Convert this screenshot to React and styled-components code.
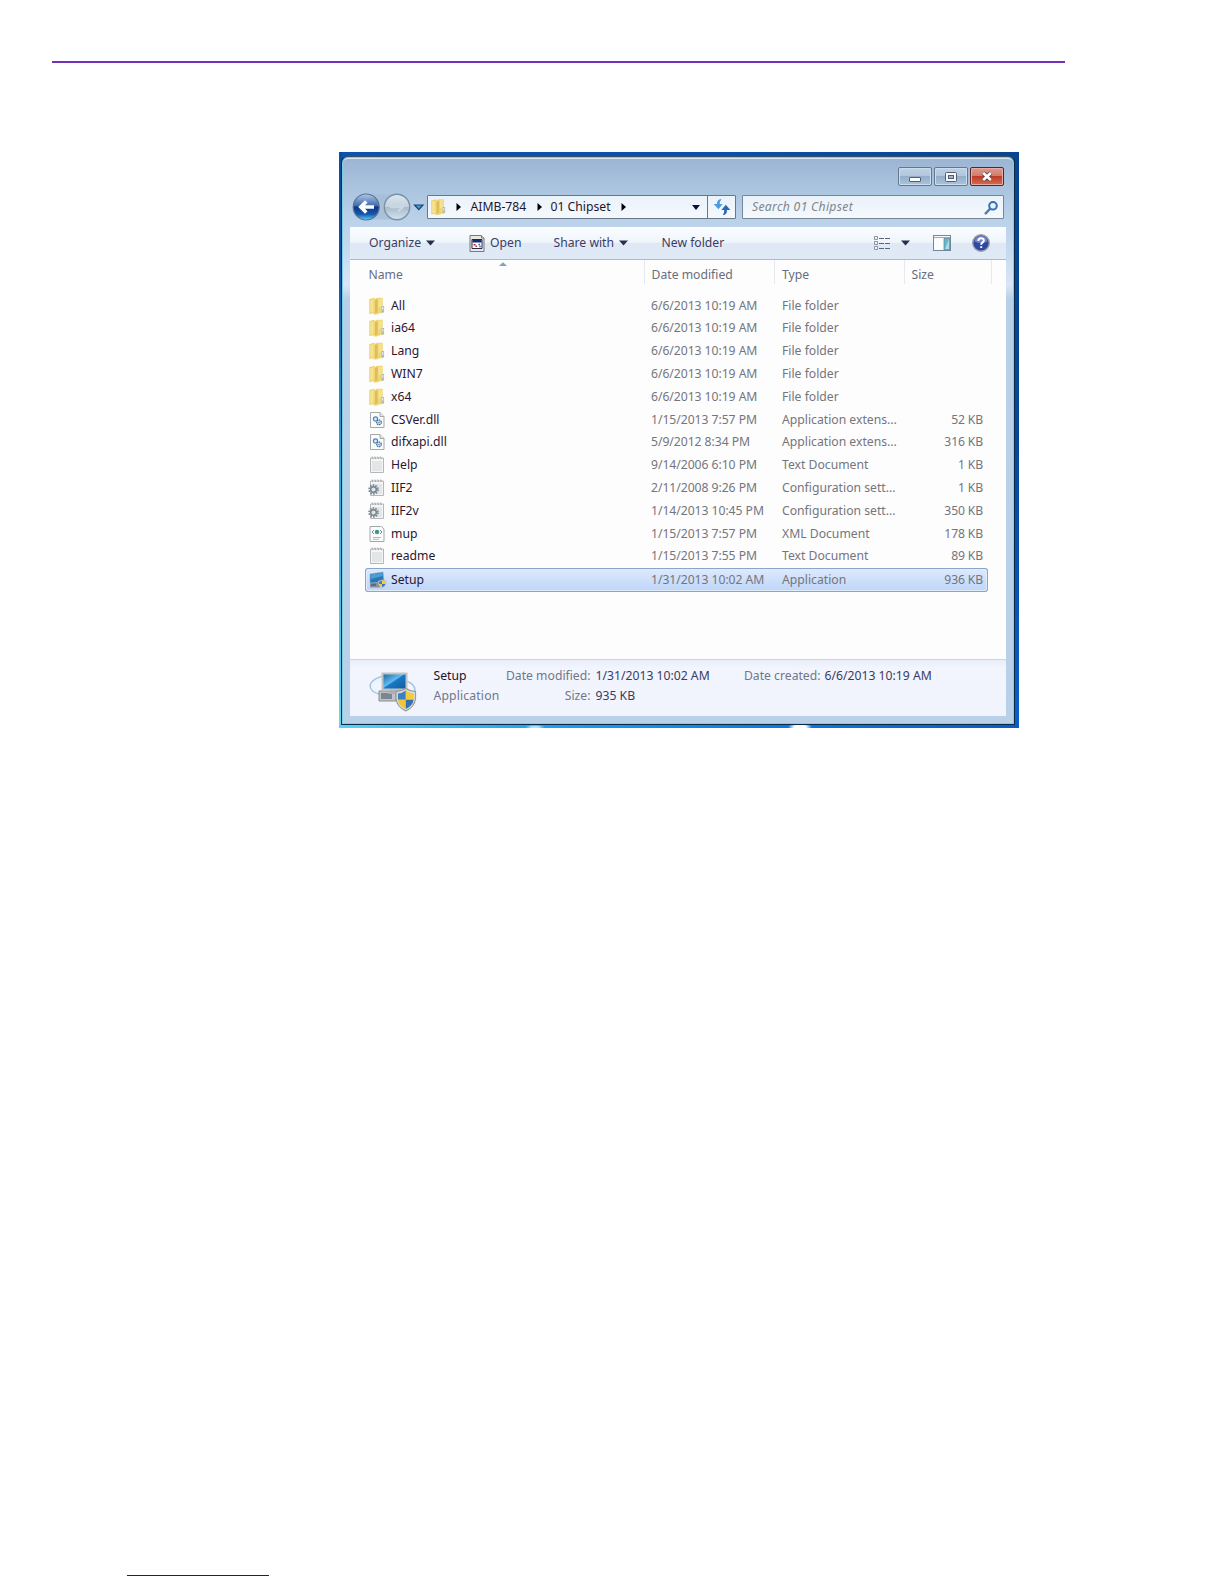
import React from "react";
import styled, { createGlobalStyle } from "styled-components";

const GlobalStyle = createGlobalStyle`
  * { box-sizing: border-box; }
  body { margin: 0; background: #fff; }
`;

const Page = styled.main`
  width: 1224px;
  height: 1584px;
  padding-top: 61px;
  overflow: hidden;
  background: #fff;
  font: 12.2px/20px "Noto Sans", "Open Sans", sans-serif;
  color: #1d1530;
  white-space: pre;
`;

const HeaderRule = styled.div`
  width: 1013px;
  height: 2px;
  margin: 0 0 89px 52px;
  background: #7430b8;
`;

const FooterRule = styled.div`
  width: 142px;
  height: 1px;
  margin: 847px 0 0 127px;
  background: #1c1490;
`;

const Desktop = styled.section`
  width: 680px;
  height: 576px;
  margin-left: 339px;
  padding: 4px 4px 3px 2px;
  background:
    radial-gradient(ellipse 12px 4px at 461px 575px, #fff 50%, transparent) no-repeat,
    radial-gradient(ellipse 10px 2px at 196px 575px, #a5e4fa 40%, transparent) no-repeat,
    linear-gradient(90deg, #5bd2f5, #1ba3f0 30%, #0b78e0 65%, #0a5cc0) 0 573px / 100% 3px no-repeat,
    linear-gradient(#0b4ea4, #0b56aa 20%, #35a4d8 55%, #66d6f4) 0 0 / 3px 100% no-repeat,
    linear-gradient(90deg, #0d55ac, #0850a8 60%, #0a448e) 0 0 / 100% 5px no-repeat,
    linear-gradient(#0a448e, #06479a 50%, #0a5fc8);
`;

const Window = styled.div`
  width: 674px;
  height: 569px;
  display: flex;
  flex-direction: column;
  padding: 0 7px 7px;
  border: 1px solid #082c48;
  border-top-color: #36506c;
  border-radius: 7px 7px 1px 1px;
  background: linear-gradient(#9ab4d2, #a9c2dd 28px, #bad1e9 62px, #c3d9ef 90px, #d8e6f5 128px, #b8cfe8 142px, #b9d1e8);
  box-shadow: inset 0 0 0 1px #7fd0e0, inset 0 2px 0 #d9e8f3;
`;

const WindowInner = styled.div`
  display: flex;
  flex-direction: column;
  flex: 1;
  margin: 0 1px 1px;
`;

const TitleBar = styled.div`
  display: flex;
  justify-content: flex-end;
  gap: 2px;
  height: 38px;
  padding: 10px 2px 0 0;
`;

const CaptionButton = styled.button`
  width: 34px;
  height: 19px;
  padding: 0;
  display: grid;
  place-items: center;
  border: 1px solid ${(p) => (p.$close ? "#54252b" : "#63798f")};
  border-radius: 2px;
  box-shadow: inset 0 0 0 1px ${(p) => (p.$close ? "#e8ada5" : "#cbdcec")};
  background: ${(p) =>
    p.$close
      ? "linear-gradient(#dc9a8d, #d27a69 48%, #bd3c28 50%, #d27050)"
      : "linear-gradient(#bfd1e4, #b0c6dd 48%, #94aeca 50%, #aac4df)"};
`;

const NavBar = styled.div`
  display: flex;
  align-items: center;
  height: 24px;
  padding-right: 2px;
`;

const NavArrows = styled.svg`
  width: 77px;
  height: 30px;
  flex: none;
`;

const AddressBar = styled.div`
  display: flex;
  align-items: center;
  width: 309px;
  height: 24px;
  margin-right: 6px;
  border: 1px solid #67788b;
  border-radius: 1px;
  background: linear-gradient(#eaf2fa, #f5f9fd);
`;

const Crumb = styled.span`
  width: ${(p) => p.$w}px;
  padding-left: ${(p) => p.$pad || 0}px;
  flex: none;
`;

const Spacer = styled.span`
  width: ${(p) => p.$w}px;
  flex: none;
`;

const RefreshButton = styled.span`
  display: grid;
  place-items: center;
  width: 28px;
  height: 22px;
  margin-left: auto;
  border-left: 1px solid #67788b;
`;

const SearchBox = styled.div`
  display: flex;
  align-items: center;
  justify-content: space-between;
  flex: 1;
  height: 24px;
  padding: 0 4px 0 9px;
  border: 1px solid #73869b;
  border-radius: 1px;
  background: linear-gradient(#e9f1f9, #f5f9fd);
  color: #7e858e;
  font-style: italic;
  letter-spacing: 0.3px;
`;

const Client = styled.div`
  display: flex;
  flex-direction: column;
  flex: 1;
  margin-top: 8px;
  background: #fdfdfe;
`;

const ToolBar = styled.div`
  display: flex;
  align-items: center;
  height: 33px;
  padding: 0 15px 0 19px;
  border-bottom: 1px solid #a9bbd2;
  background: linear-gradient(#fbfdff, #eff5fc 48%, #dfe9f6 50%, #e0eaf7);
  color: #3b3c62;
`;

const ToolItem = styled.span`
  display: flex;
  align-items: center;
  width: ${(p) => p.$w}px;
  gap: 5px;
`;

const Columns = styled.div`
  display: grid;
  grid-template-columns: 295px 130px 130px 87px 1fr;
  height: 34.3px;
  color: #686d7c;
`;

const ColumnHead = styled.div`
  height: 24px;
  padding: 5px 0 0 ${(p) => p.$pad}px;
  border-right: 1px solid #e6eaf0;
`;

const SortMark = styled.svg`
  display: block;
  width: 8px;
  height: 4px;
  margin: -3px 0 -1px 130px;
`;

const Rows = styled.div`
  padding-left: 15px;
`;

const Row = styled.div`
  display: grid;
  grid-template-columns: 20px 266px 131px 130px 71px;
  align-items: center;
  width: 623px;
  height: 22.8px;
  color: #74757d;
  ${(p) =>
    p.$selected &&
    `
    height: 24px;
    border-radius: 3px;
    background: linear-gradient(#dfeafc, #bcd5f9);
    box-shadow: inset 0 0 0 1px #8ba4c8, inset 0 0 0 2px #e0ebfb;
  `}
`;

const FileIcon = styled.svg`
  width: 17px;
  height: 18px;
  margin-left: 4px;
  overflow: visible;
`;

const FileName = styled.span`
  padding-left: 6px;
  color: #2b1630;
`;

const Cell = styled.span`
  letter-spacing: ${(p) => p.$ls || 0}px;
`;

const SizeCell = styled.span`
  text-align: right;
  letter-spacing: -0.15px;
`;

const Details = styled.footer`
  display: flex;
  height: 57px;
  margin-top: auto;
  padding: 6px 0 0 19px;
  border-top: 1px solid #cdd3e6;
  background: linear-gradient(#e9edf8, #f2f5fd 8px, #f1f4fd);
  color: #71768a;
`;

const BigIcon = styled.svg`
  width: 48px;
  height: 42px;
  margin: 6px 16.5px 0 0;
`;

const DetailGrid = styled.div`
  display: grid;
  grid-template-columns: 64px 93px 5px 146px 79px 4px 120px;
  grid-auto-rows: 20px;
  align-content: start;
`;

const DetailLabel = styled.span`
  justify-self: end;
`;

const DetailValue = styled.span`
  grid-column: ${(p) => p.$col};
  color: ${(p) => (p.$name ? "#20112a" : "#3a3a64")};
`;

const Caret = () => (
  <svg width="9" height="6" viewBox="0 0 9 6">
    <path d="M0 .5h9L4.5 5.5z" fill="#26304e" />
  </svg>
);

const CrumbArrow = () => (
  <svg width="5" height="8" viewBox="0 0 5 8">
    <path d="M.5 0 5 4 .5 8z" fill="#000" />
  </svg>
);

const FolderShape = () => (
  <g transform="translate(-.8 -.3) scale(1.08)">
    <path d="M1 2.2 6 1v14l-5 1z" fill="#e9cf6c" />
    <path d="M5.5 2.5 8 1h5.5v13.5L8 16.5H5z" fill="#efd778" />
    <path d="M1.8 3 5 2.2v12L1.8 15z" fill="#f5e190" />
    <path d="M6.2 3.4 8.8 2.2v12.2l-2.6 1.4z" fill="#e0be57" />
    <path d="M9.5 2h3.2v7l-3.2 1z" fill="#f5e191" />
    <path d="M12.3 8.5h2.4v5.8l-2.4 1z" fill="#b6bda5" />
    <path d="M12.8 9.5h1.2v2.5h-1.2z" fill="#dbe8f2" />
  </g>
);

const Paper = ({ folded }) => (
  <>
    <path
      d={folded ? "M1.5 1.5H11l4 4v11H1.5z" : "M1.5 2.5h13v14h-13z"}
      fill="#fafbfb"
      stroke="#a4a8aa"
    />
    {folded && <path d="M11 1.5v4h4" fill="#e3e7ea" stroke="#a4a8aa" />}
  </>
);

const Notepad = () => (
  <>
    <path d="M1.5 2h13v14.5h-13z" fill="#f4f5f5" stroke="#b4b8ba" />
    <path d="M3 6h10M3 8h10M3 10h10M3 12h10M3 14h10" stroke="#d3d6d7" />
    <path d="M3 .5 4 3M5.8.5l1 2.5M8.6.5l1 2.5M11.4.5l1 2.5" stroke="#a0a4a5" />
  </>
);

const Shield = ({ transform }) => (
  <g transform={transform}>
    <path d="M10 0Q15 3 20 3V10Q19 18 10 22Q1 18 0 10V3Q5 3 10 0" fill="#d7d9d5" stroke="#92968e" />
    <path d="M10 2v9H2V5q4 0 8-3" fill="#3a7fc9" />
    <path d="M10 2q4 3 8 3v6h-8z" fill="#f3cd38" />
    <path d="M2 11h8v9q-7-3-8-9" fill="#f1c632" />
    <path d="M10 11h8q-1 6-8 9z" fill="#356fb8" />
  </g>
);

const icons = {
  folder: <FolderShape />,
  dll: (
    <>
      <Paper folded />
      <circle cx="6.5" cy="8" r="2.1" fill="#d9e9f5" stroke="#5586b0" strokeWidth="1.2" />
      <circle cx="10" cy="11.3" r="2.3" fill="#e5f0f8" stroke="#396e9f" strokeWidth="1.3" strokeDasharray="1.3 .6" />
      <circle cx="10" cy="11.3" r=".7" fill="#396e9f" />
    </>
  ),
  text: <Notepad />,
  config: (
    <>
      <Notepad />
      <circle cx="4.5" cy="10.5" r="4.3" fill="none" stroke="#7e8d97" strokeWidth="2" strokeDasharray="1.6 1.1" />
      <circle cx="4.5" cy="10.5" r="2.8" fill="#dce4e8" stroke="#71818c" strokeWidth="1.4" />
    </>
  ),
  xml: (
    <>
      <path d="M1 1.5h11.5l2.5 2.5v12.5H1z" fill="#fafbfb" stroke="#a4a8aa" />
      <path d="M5 5 3 7l2 2M11 5l2 2-2 2" fill="none" stroke="#738ba1" />
      <circle cx="8" cy="7" r="2.3" fill="#48a182" />
      <path d="M7 6.1 8.5 5.6l.8 1.4-1 .8z" fill="#4276b8" />
      <path d="M4 12.5h8M4 14.3h6" stroke="#b5b9bb" />
    </>
  ),
  setup: (
    <>
      <path d="M1 11h10v5.5H1z" fill="#899097" />
      <path d="M2 12.5h5v2.5H2z" fill="#636b72" />
      <path d="m1 3 13-2 1 10-14 1z" fill="#2b76b7" stroke="#8ab4d2" strokeWidth=".7" />
      <path d="m1.5 3.5 12-1.8.4 3.3L2 8z" fill="#4e9cd4" />
      <Shield transform="translate(9.3 8.7) scale(.38)" />
    </>
  ),
};

const files = [
  ["folder", "All", "6/6/2013 10:19 AM", "File folder", ""],
  ["folder", "ia64", "6/6/2013 10:19 AM", "File folder", ""],
  ["folder", "Lang", "6/6/2013 10:19 AM", "File folder", ""],
  ["folder", "WIN7", "6/6/2013 10:19 AM", "File folder", ""],
  ["folder", "x64", "6/6/2013 10:19 AM", "File folder", ""],
  ["dll", "CSVer.dll", "1/15/2013 7:57 PM", "Application extens...", "52 KB"],
  ["dll", "difxapi.dll", "5/9/2012 8:34 PM", "Application extens...", "316 KB"],
  ["text", "Help", "9/14/2006 6:10 PM", "Text Document", "1 KB"],
  ["config", "IIF2", "2/11/2008 9:26 PM", "Configuration sett...", "1 KB"],
  ["config", "IIF2v", "1/14/2013 10:45 PM", "Configuration sett...", "350 KB"],
  ["xml", "mup", "1/15/2013 7:57 PM", "XML Document", "178 KB"],
  ["text", "readme", "1/15/2013 7:55 PM", "Text Document", "89 KB"],
  ["setup", "Setup", "1/31/2013 10:02 AM", "Application", "936 KB"],
];

const BackForward = () => (
  <NavArrows viewBox="0 0 77 30">
    <defs>
      <linearGradient id="back" x2="0" y2="1">
        <stop stopColor="#b3c9e8" />
        <stop offset=".45" stopColor="#3e6bb0" />
        <stop offset=".5" stopColor="#0d3585" />
        <stop offset=".78" stopColor="#1559b0" />
        <stop offset="1" stopColor="#62cdf4" />
      </linearGradient>
      <linearGradient id="forward" x2="0" y2="1">
        <stop stopColor="#dbe6ee" />
        <stop offset=".48" stopColor="#c4d2de" />
        <stop offset=".52" stopColor="#a9bccd" />
        <stop offset="1" stopColor="#d5e2ee" />
      </linearGradient>
    </defs>
    <path d="M16 2.5h31q10 2 12 12l-12 13H16z" fill="#a4bad2" opacity=".65" />
    <circle cx="16.2" cy="15" r="13" fill="url(#back)" stroke="#5a7395" strokeWidth="1.2" />
    <path d="M24 15H11.5M16.3 9.4 10.7 15l5.6 5.6" fill="none" stroke="#fff" strokeWidth="3.5" />
    <circle cx="47" cy="15" r="12.7" fill="url(#forward)" stroke="#7990a8" strokeWidth="1.4" />
    <path d="M40 15h12M48 10.5l4.8 4.5-4.8 4.5" fill="none" stroke="#c9d7e3" strokeWidth="2.3" />
    <path d="M64.5 13h8.5l-4.2 4.7z" fill="#4297d2" stroke="#1e436f" strokeWidth="1.2" />
  </NavArrows>
);

export default function App() {
  return (
    <Page>
      <GlobalStyle />
      <HeaderRule />
      <Desktop>
        <Window>
          <WindowInner>
            <TitleBar>
              <CaptionButton aria-label="Minimize">
                <svg width="12" height="14" viewBox="0 0 12 14">
                  <rect x=".5" y="7.5" width="11" height="4" rx=".5" fill="#fff" stroke="#535d6d" />
                </svg>
              </CaptionButton>
              <CaptionButton aria-label="Maximize">
                <svg width="12" height="10" viewBox="0 0 12 10">
                  <rect x=".5" y=".5" width="11" height="9" rx="1" fill="#f6f8fa" stroke="#535d6d" />
                  <rect x="3.5" y="3.5" width="5" height="3" fill="#9fb7d0" stroke="#535d6d" />
                </svg>
              </CaptionButton>
              <CaptionButton $close aria-label="Close">
                <svg width="14" height="11" viewBox="0 0 14 11">
                  <path d="m3.2 2 7.6 7M10.8 2 3.2 9" stroke="#59404b" strokeWidth="4.4" />
                  <path d="m3.2 2 7.6 7M10.8 2 3.2 9" stroke="#fff" strokeWidth="2.7" />
                </svg>
              </CaptionButton>
            </TitleBar>
            <NavBar>
              <BackForward />
              <AddressBar>
                <Spacer $w={3} />
                <svg width="15" height="18" viewBox="0 0 16 18"><FolderShape /></svg>
                <Spacer $w={10} />
                <CrumbArrow />
                <Crumb $w={76} $pad={9.5}>AIMB-784</Crumb>
                <CrumbArrow />
                <Crumb $w={79} $pad={8.5}>01 Chipset</Crumb>
                <CrumbArrow />
                <Spacer $w={65.5} />
                <svg width="8" height="5" viewBox="0 0 8 5"><path d="M0 0h8L4 5z" fill="#0a0e45" /></svg>
                <RefreshButton>
                  <svg width="18" height="18" viewBox="0 0 16 16">
                    <path d="M7.6.8Q3.2 1 3.6 5.4H.6L4.8 10 8.6 5.4H6Q5.8 3 7.6.8" fill="#4b9be2" />
                    <path d="M8.6 15.2q4.2-.4 3.8-4.6h3L11.4 6 7.4 10.6H10q.2 2.4-1.4 4.6" fill="#2c69b5" />
                  </svg>
                </RefreshButton>
              </AddressBar>
              <SearchBox>
                Search 01 Chipset
                <svg width="15" height="15" viewBox="0 0 15 15">
                  <path d="m6.2 8.7-4.5 4.6" stroke="#5480b3" strokeWidth="2.5" strokeLinecap="round" />
                  <circle cx="9" cy="5.8" r="3.8" fill="#e7f3fc" stroke="#376fae" strokeWidth="2" />
                </svg>
              </SearchBox>
            </NavBar>
            <Client>
              <ToolBar>
                <ToolItem $w={100}>Organize<Caret /></ToolItem>
                <ToolItem $w={84.5}>
                  <svg width="16" height="17" viewBox="0 0 15 17">
                    <path d="M.5.5H12l2.5 2.5v13.5H.5z" fill="#e9e8e1" stroke="#77797c" />
                    <path d="M12 .5V3h2.5" fill="#d8d8d3" stroke="#77797c" />
                    <path d="M2.5 4.5h10v9h-10z" fill="#fff" stroke="#252947" />
                    <path d="M3 5h9v2.5H3z" fill="#18296f" />
                    <path d="M4 9h2v1.5H4zM6 10.5h1.5V12H6z" fill="#b72828" />
                    <path d="M9 8.7h1.5v1.5H9zM9.8 10.7h1.5v1.5H9.8z" fill="#3158b5" />
                  </svg>
                  Open
                </ToolItem>
                <ToolItem $w={108}>Share with<Caret /></ToolItem>
                <ToolItem $w={211.5}>New folder</ToolItem>
                <svg width="18" height="14" viewBox="0 0 18 14">
                  <path d="M1.5.5h3v3h-3zM1.5 5.5h3v3h-3zM1.5 10.5h3v3h-3z" fill="#f5f8fa" stroke="#8995a3" />
                  <path d="M6 2.5h5M12 2.5h5M6 7.5h5M12 7.5h5M6 12.5h5M12 12.5h5" stroke="#596779" />
                </svg>
                <Spacer $w={10} />
                <Caret />
                <Spacer $w={23} />
                <svg width="18" height="16" viewBox="0 0 18 16">
                  <rect x=".5" y=".5" width="17" height="15" fill="#fbfdfd" stroke="#728797" />
                  <path d="M1 2.5h16" stroke="#93a6b4" />
                  <path d="M11 3.5h6V15h-6z" fill="#66b7cd" stroke="#648e9f" strokeWidth=".8" />
                  <path d="m12 14 4-10v10z" fill="#a8dbe6" />
                </svg>
                <Spacer $w={21} />
                <svg width="18" height="18" viewBox="0 0 18 18">
                  <circle cx="9" cy="9" r="8.3" fill="#2e49a4" stroke="#999fac" strokeWidth="1.4" />
                  <path d="M2.5 7.5a6.6 6.6 0 0 1 13 0Q9 10.5 2.5 7.5" fill="#7183c7" />
                  <path d="M6.4 7Q6.3 4.3 9 4.3q2.8 0 2.8 2.3 0 1.2-1.4 2.1-1.2.8-1.2 2M9.2 12.2v1.9" fill="none" stroke="#fff" strokeWidth="2" />
                </svg>
              </ToolBar>
              <Columns>
                <ColumnHead $pad={18.5}>
                  <SortMark viewBox="0 0 8 4"><path d="M0 4 4 .3 8 4z" fill="#7ba4ba" /></SortMark>
                  Name
                </ColumnHead>
                <ColumnHead $pad={6.5}>Date modified</ColumnHead>
                <ColumnHead $pad={7}>Type</ColumnHead>
                <ColumnHead $pad={6.5}>Size</ColumnHead>
              </Columns>
              <Rows>
                {files.map(([icon, name, date, type, size], i) => (
                  <Row key={name} $selected={i === files.length - 1}>
                    <FileIcon viewBox="0 0 17 18">{icons[icon]}</FileIcon>
                    <FileName>{name}</FileName>
                    <Cell $ls={-0.05}>{date}</Cell>
                    <Cell>{type}</Cell>
                    <SizeCell>{size}</SizeCell>
                  </Row>
                ))}
              </Rows>
              <Details>
                <BigIcon viewBox="0 0 48 42">
                  <defs>
                    <linearGradient id="screen" x2="1" y2="1">
                      <stop stopColor="#13629f" />
                      <stop offset=".45" stopColor="#62bbed" />
                      <stop offset=".5" stopColor="#1978c4" />
                      <stop offset="1" stopColor="#125a9b" />
                    </linearGradient>
                  </defs>
                  <path d="M14 4Q-2 9 2 17q4 7 22 6M37 9q9 3 9 9-1 5-8 6" fill="none" stroke="#a8c5df" strokeWidth="1.5" />
                  <path d="M14 6Q2 11 5 16q4 4 15 5" fill="none" stroke="#e7f4ff" strokeWidth="1.4" />
                  <path d="M10 19h17v10H10z" fill="#bec3c7" stroke="#858d94" />
                  <path d="M12 21h11v6H12z" fill="#7c868e" />
                  <path d="M13.5 1.5h24v16h-24z" fill="url(#screen)" stroke="#bfc3c5" strokeWidth="2" />
                  <path d="M21 18h10l2 4H19z" fill="#aab0b5" />
                  <Shield transform="translate(27 16.5) scale(.98 1.02)" />
                </BigIcon>
                <DetailGrid>
                  <DetailValue $name $col="1">Setup</DetailValue>
                  <DetailLabel>Date modified:</DetailLabel>
                  <DetailValue $col="4">1/31/2013 10:02 AM</DetailValue>
                  <DetailLabel>Date created:</DetailLabel>
                  <DetailValue $col="7">6/6/2013 10:19 AM</DetailValue>
                  <Cell $ls={0.15}>Application</Cell>
                  <DetailLabel>Size:</DetailLabel>
                  <DetailValue $col="4">935 KB</DetailValue>
                </DetailGrid>
              </Details>
            </Client>
          </WindowInner>
        </Window>
      </Desktop>
      <FooterRule />
    </Page>
  );
}
